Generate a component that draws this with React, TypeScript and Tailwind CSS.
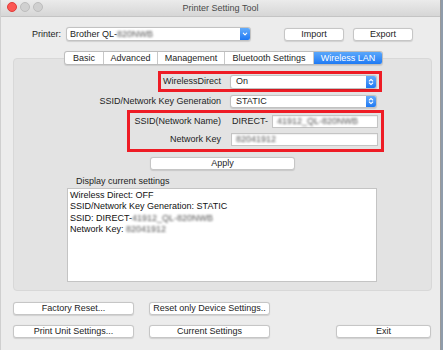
import type { ReactNode } from "react";

const font = "font-['Liberation_Sans',Arial,sans-serif]";

function Blur({ children }: { children: ReactNode }) {
  return <span className="text-[#555] blur-[1px]">{children}</span>;
}

function Button({ label, className }: { label: string; className: string }) {
  return (
    <button
      type="button"
      className={`flex h-[13px] items-center justify-center rounded-[3px] border border-[#c6c6c6] bg-white text-[9px] leading-none text-[#1d1d1d] shadow-[0_0.5px_1px_rgba(0,0,0,0.12)] ${className}`}
    >
      {label}
    </button>
  );
}

function UpDown() {
  return (
    <svg width="6" height="10" viewBox="0 0 6 10" fill="none" stroke="white" strokeWidth="1.1" strokeLinecap="round" strokeLinejoin="round">
      <path d="M1.3 4 L3 2.3 L4.7 4" />
      <path d="M1.3 6 L3 7.7 L4.7 6" />
    </svg>
  );
}

function PopUp({ value, className }: { value: string; className: string }) {
  return (
    <div className={`flex items-center rounded-[3px] border border-[#c2c2c2] bg-white shadow-[0_0.5px_1px_rgba(0,0,0,0.12)] ${className}`}>
      <span className="flex-1 pl-[5px] text-[9px] leading-none text-[#1d1d1d]">{value}</span>
      <span className="flex h-full w-[10px] items-center justify-center rounded-r-[2px] bg-gradient-to-b from-[#63acfb] to-[#1c78f3]">
        <UpDown />
      </span>
    </div>
  );
}

function Field({ children, className }: { children?: ReactNode; className: string }) {
  return (
    <div className={`flex h-[13px] items-center border border-[#c4c4c4] bg-white pl-[4px] text-[9px] leading-none text-[#1d1d1d] shadow-[inset_0_0.5px_1px_rgba(0,0,0,0.1)] ${className}`}>
      {children}
    </div>
  );
}

const tabs = [
  { label: "Basic", w: "w-[38px]" },
  { label: "Advanced", w: "w-[54px]" },
  { label: "Management", w: "w-[67px]" },
  { label: "Bluetooth Settings", w: "w-[89px]" },
  { label: "Wireless LAN", w: "w-[69px]" }
];

export default function App() {
  return (
    <div className={`flex h-[350px] w-[443px] overflow-hidden bg-[#8f9cab] ${font}`}>
      <div className="flex h-[350px] w-[441px] flex-col border-x border-l-[#cfcfcf] border-r-[#9a9a9a] bg-[#ececec]">
        {/* title bar */}
        <div className="relative flex h-[17px] items-center border-b border-[#c4c4c4] bg-gradient-to-b from-[#ebebeb] to-[#d6d6d6]">
          <div className="absolute left-[6px] top-[2px] flex gap-[3px]">
            <span className="h-[10px] w-[10px] rounded-full border border-[#df3d3a] bg-[#fc5753]" />
            <span className="h-[10px] w-[10px] rounded-full border border-[#bdbdbd] bg-[#d0d0d0]" />
            <span className="h-[10px] w-[10px] rounded-full border border-[#bdbdbd] bg-[#d0d0d0]" />
          </div>
          <div className="flex-1 text-center text-[9px] leading-none text-[#4a4a4a]">Printer Setting Tool</div>
        </div>

        {/* printer row */}
        <div className="mt-[10px] flex h-[14px] items-center pl-[31px]">
          <span className="text-[9px] leading-none text-[#1d1d1d]">Printer:</span>
          <div className="ml-[5px] flex h-[14px] w-[185px] items-center rounded-[3px] border border-[#c2c2c2] bg-white shadow-[0_0.5px_1px_rgba(0,0,0,0.12)]">
            <span className="flex-1 pl-[3px] text-[9px] leading-none text-[#1d1d1d]">
              Brother QL-<Blur>820NWB</Blur>
            </span>
            <span className="flex h-full w-[10px] items-center justify-center rounded-r-[2px] bg-gradient-to-b from-[#63acfb] to-[#1c78f3]">
              <svg width="6" height="6" viewBox="0 0 6 6" fill="none" stroke="white" strokeWidth="1.1" strokeLinecap="round" strokeLinejoin="round">
                <path d="M1.3 2.2 L3 3.9 L4.7 2.2" />
              </svg>
            </span>
          </div>
          <Button label="Import" className="ml-[33px] w-[60px]" />
          <Button label="Export" className="ml-[9px] w-[60px]" />
        </div>

        {/* tabs */}
        <div className="relative z-10 mt-[10px] ml-[63px] flex h-[14px] w-fit overflow-hidden rounded-[3px] border border-[#bdbdbd] bg-white shadow-[0_0.5px_1px_rgba(0,0,0,0.1)]">
          {tabs.map((t, i) => (
            <div
              key={t.label}
              className={`flex h-full items-center justify-center text-[9px] leading-none ${t.w} ${i > 0 ? "border-l border-[#c8c8c8]" : ""} ${
                i === tabs.length - 1 ? "bg-gradient-to-b from-[#5aa7fb] to-[#1e7af4] text-white" : "text-[#1d1d1d]"
              }`}
            >
              {t.label}
            </div>
          ))}
        </div>

        {/* panel */}
        <div className="-mt-[7px] ml-[12px] flex w-[419px] flex-col rounded-[4px] border border-[#d8d8d8] bg-[#e3e3e3] pb-[8px] pt-[12px]">
          {/* WirelessDirect */}
          <div className="ml-[144px] flex h-[21px] w-[224px] items-center border-[3px] border-[#ee1c25] pr-[2px]">
            <span className="w-[60px] text-right text-[9px] leading-none text-[#1d1d1d]">WirelessDirect</span>
            <PopUp value="On" className="ml-[9px] h-[14px] w-[147px]" />
          </div>

          {/* SSID/Network Key Generation */}
          <div className="mt-[2px] flex h-[14px] items-center">
            <span className="w-[207px] text-right text-[9px] leading-none text-[#1d1d1d]">SSID/Network Key Generation</span>
            <PopUp value="STATIC" className="ml-[9px] h-[13px] w-[147px]" />
          </div>

          {/* SSID + key */}
          <div className="ml-[113px] mt-[2px] flex w-[257px] flex-col border-[3px] border-[#ee1c25] pb-[3px] pt-[2px]">
            <div className="flex h-[13px] items-center">
              <span className="w-[91px] text-right text-[9px] leading-none text-[#1d1d1d]">SSID(Network Name)</span>
              <span className="ml-[11px] w-[40px] text-[9px] leading-none text-[#1d1d1d]">DIRECT-</span>
              <Field className="w-[106px]">
                <Blur>41912_QL-820NWB</Blur>
              </Field>
            </div>
            <div className="mt-[5px] flex h-[13px] items-center">
              <span className="w-[91px] text-right text-[9px] leading-none text-[#1d1d1d]">Network Key</span>
              <Field className="ml-[10px] w-[147px]">
                <Blur>82041912</Blur>
              </Field>
            </div>
          </div>

          <Button label="Apply" className="ml-[136px] mt-[5px] w-[145px]" />

          <div className="ml-[62px] mt-[5px] flex h-[12px] items-center text-[9px] leading-none text-[#1d1d1d]">Display current settings</div>

          <div className="ml-[53px] mt-[1px] h-[94px] w-[310px] border border-[#c4c4c4] bg-white px-[2px] pt-[1px] text-[9px] leading-[11.3px] text-[#111]">
            <div>Wireless Direct: OFF</div>
            <div>SSID/Network Key Generation: STATIC</div>
            <div>
              SSID: DIRECT-<Blur>41912_QL-820NWB</Blur>
            </div>
            <div>
              Network Key: <Blur>82041912</Blur>
            </div>
          </div>
        </div>

        {/* bottom buttons */}
        <div className="ml-[12px] mt-[11px] flex">
          <Button label="Factory Reset..." className="w-[121px]" />
          <Button label="Reset only Device Settings.." className="ml-[15px] w-[121px]" />
        </div>
        <div className="ml-[12px] mt-[10px] flex">
          <Button label="Print Unit Settings..." className="w-[121px]" />
          <Button label="Current Settings" className="ml-[15px] w-[121px]" />
          <Button label="Exit" className="ml-[66px] w-[95px]" />
        </div>
      </div>
    </div>
  );
}
